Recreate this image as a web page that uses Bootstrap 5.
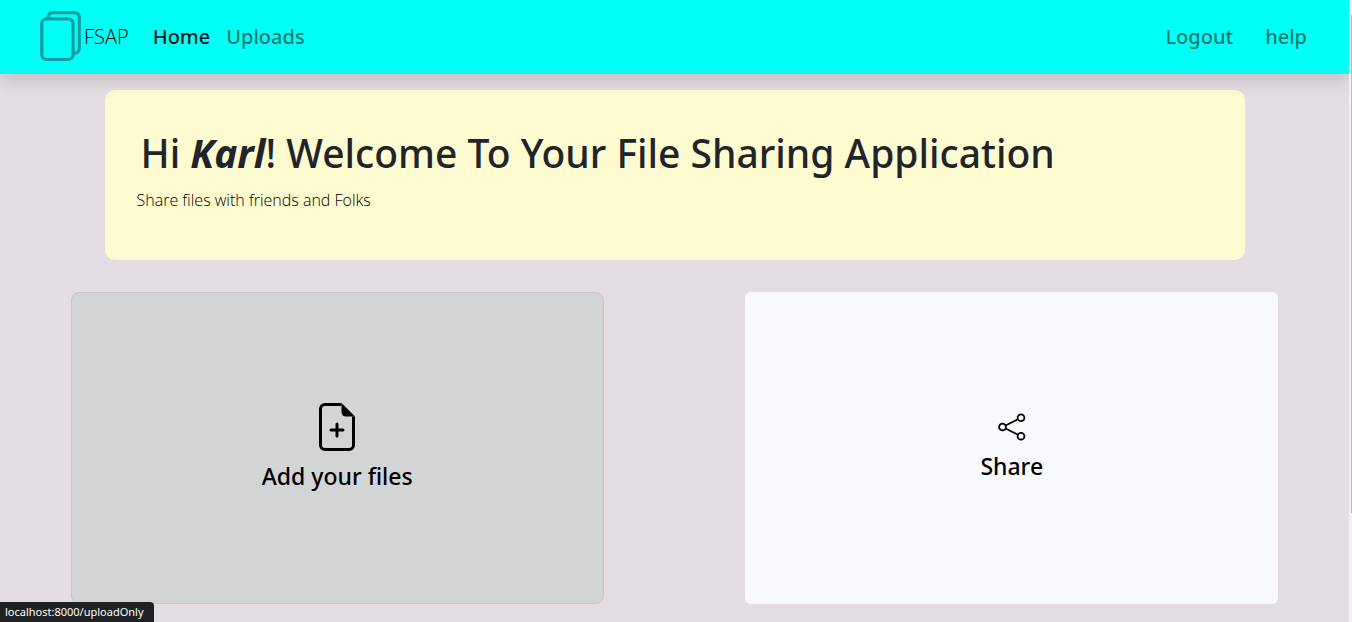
<!DOCTYPE html>
<html lang="en">
<head>
<meta charset="utf-8">
<meta name="viewport" content="width=device-width, initial-scale=1">
<title>FSAP</title>
<link href="https://cdn.jsdelivr.net/npm/bootstrap@5.3.0/dist/css/bootstrap.min.css" rel="stylesheet">
<style>
body { background: #e4dde3; font-family: "Noto Sans", "Open Sans", sans-serif; padding-right: 3px; }
.topbar { background: #00fff4; min-height: 74px; padding: 0 34px 2px 34px; z-index: 10; }
.topbar .brand-name { font-family: "Open Sans", sans-serif; font-size: 20px; font-weight: 300; line-height: 32px; padding-top: 2px; color: #000; }
.topbar .nav-link { font-size: 20px; font-weight: 500; line-height: 32px; padding-bottom: 7px; color: rgba(0,0,0,.55); }
.topbar .nav-link.active { color: rgba(0,0,0,.9); }
.topbar .brand-icon { color: #139aa6; }
.hero { background: #fffbd1; border-radius: 10px; max-width: 1140px; min-height: 170px; padding: 39px 32px; }
.hero h1 { font-size: 39px; font-weight: 500; line-height: 48px; color: #212529; margin: 0 0 11px 4px; }
.hero p { font-family: "Open Sans", sans-serif; font-size: 16px; font-weight: 300; line-height: 24px; color: #000; }
.tile { width: 39.5%; min-height: 312px; border-radius: 8px; color: #000; font-size: 23px; font-weight: 500; line-height: 34px; }
.tile:hover { color: #000; }
.tile-add { background: #d3d4d5; border: 1px solid #c6c7c8; }
.tile-share { background: #f8f9fc; border-radius: 6px; }
.status { background: #202124; color: #fff; font-size: 11px; line-height: 20px; padding: 0 10px 0 5px; border-top-right-radius: 4px; }
.scroll-track { width: 3px; background: #f1f1f1; z-index: 20; }
.scroll-thumb { width: 1px; height: 80%; margin-top: 15px; background: #bdbdbd; }
</style>
</head>
<body>
<nav class="topbar navbar navbar-expand shadow position-relative">
  <a class="d-flex align-items-center text-decoration-none me-3" href="#">
    <svg class="brand-icon" width="50" height="50" viewBox="0 0 16 16" fill="currentColor" aria-hidden="true"><path d="M13 0H6a2 2 0 0 0-2 2 2 2 0 0 0-2 2v10a2 2 0 0 0 2 2h7a2 2 0 0 0 2-2 2 2 0 0 0 2-2V2a2 2 0 0 0-2-2zm0 13V4a2 2 0 0 0-2-2H5a1 1 0 0 1 1-1h7a1 1 0 0 1 1 1v10a1 1 0 0 1-1 1zM3 4a1 1 0 0 1 1-1h7a1 1 0 0 1 1 1v10a1 1 0 0 1-1 1H4a1 1 0 0 1-1-1V4z"/></svg>
    <span class="brand-name">FSAP</span>
  </a>
  <div class="navbar-nav me-auto">
    <a class="nav-link active" aria-current="page" href="#">Home</a>
    <a class="nav-link" href="#">Uploads</a>
  </div>
  <div class="navbar-nav gap-3">
    <a class="nav-link" href="#">Logout</a>
    <a class="nav-link" href="#">help</a>
  </div>
</nav>
<main>
  <section class="hero mx-auto mt-3">
    <h1>Hi <b><i>Karl</i></b>! Welcome To Your File Sharing Application</h1>
    <p class="mb-0">Share files with friends and Folks</p>
  </section>
  <div class="d-flex justify-content-around mt-4 pt-2">
    <a class="tile tile-add d-flex flex-column align-items-center justify-content-center gap-2 text-decoration-none" href="#">
      <svg width="48" height="48" viewBox="0 0 16 16" fill="currentColor" aria-hidden="true"><path d="M4 0h5.500v1H4a1 1 0 0 0-1 1v12a1 1 0 0 0 1 1h8a1 1 0 0 0 1-1V4.500h1V14a2 2 0 0 1-2 2H4a2 2 0 0 1-2-2V2a2 2 0 0 1 2-2z"/><path d="M9.500 3V0L14 4.500h-3A1.500 1.500 0 0 1 9.500 3z"/><path d="M8 6.500a.5.5 0 0 1 .5.5v1.500H10a.5.5 0 0 1 0 1H8.500V11a.5.5 0 0 1-1 0V9.500H6a.5.5 0 0 1 0-1h1.500V7a.5.5 0 0 1 .5-.5z"/></svg>
      <span>Add your files</span>
    </a>
    <a class="tile tile-share d-flex flex-column align-items-center justify-content-center gap-2 text-decoration-none" href="#">
      <svg width="28" height="28" viewBox="0 0 28 28" fill="none" stroke="#000" aria-hidden="true"><g stroke-width="1.800"><circle cx="4.500" cy="14" r="3.400"/><circle cx="23" cy="4.700" r="3.400"/><circle cx="23" cy="23.300" r="3.400"/></g><path stroke-width="1.600" d="M7.600 12.500 19.900 6.300M7.600 15.500l12.300 6.200"/></svg>
      <span>Share</span>
    </a>
  </div>
</main>
<div class="status position-fixed bottom-0 start-0">localhost:8000/uploadOnly</div>
<div class="scroll-track position-fixed top-0 end-0 bottom-0 d-flex justify-content-end" aria-hidden="true"><div class="scroll-thumb"></div></div>
<script src="https://cdn.jsdelivr.net/npm/bootstrap@5.3.0/dist/js/bootstrap.bundle.min.js"></script>
</body>
</html>
